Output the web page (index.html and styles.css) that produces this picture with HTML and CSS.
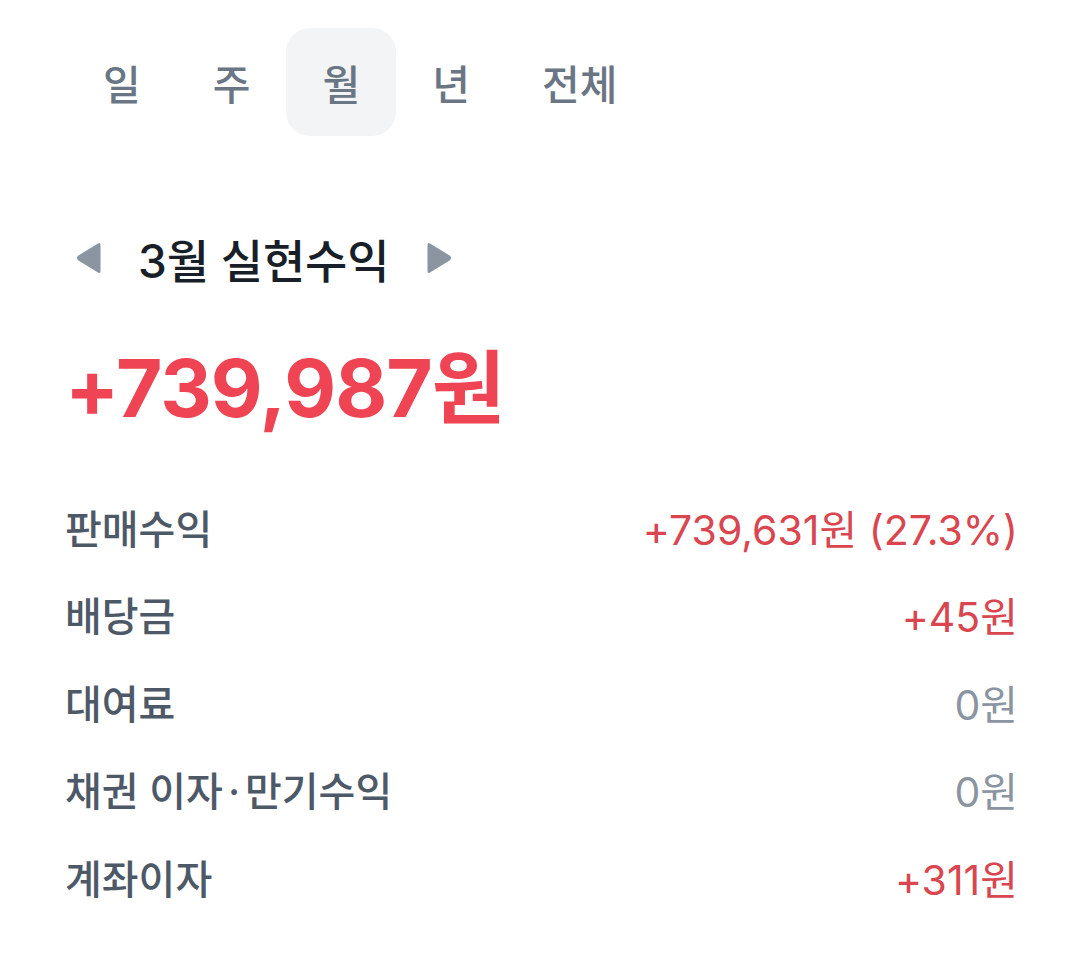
FILE: index.html
```html
<!DOCTYPE html>
<html lang="ko">
<head>
<meta charset="utf-8">
<link rel="stylesheet" href="styles.css">
</head>
<body>
<div class="page">
  <nav class="tabs">
    <span class="tab">일</span>
    <span class="tab">주</span>
    <span class="tab active">월</span>
    <span class="tab">년</span>
    <span class="tab">전체</span>
  </nav>
  <div class="period">
    <svg class="arrow" width="28" height="34" viewBox="0 0 28 34"><path d="M25.5 4 Q25.5 1 23 2.5 L3 14.8 Q1 17 3 19.2 L23 31.5 Q25.5 33 25.5 30 Z" fill="#8b95a1"/></svg>
    <h2 class="period-title">3월 실현수익</h2>
    <svg class="arrow" width="28" height="34" viewBox="0 0 28 34"><path d="M2.5 4 Q2.5 1 5 2.5 L25 14.8 Q27 17 25 19.2 L5 31.5 Q2.5 33 2.5 30 Z" fill="#8b95a1"/></svg>
  </div>
  <div class="total">+739,987원</div>
  <ul class="rows">
    <li class="row"><span class="label">판매수익</span><span class="value up">+739,631원 (27.3%)</span></li>
    <li class="row"><span class="label">배당금</span><span class="value up">+45원</span></li>
    <li class="row"><span class="label">대여료</span><span class="value zero">0원</span></li>
    <li class="row"><span class="label">채권 이자<span class="sep">·</span>만기수익</span><span class="value zero">0원</span></li>
    <li class="row"><span class="label">계좌이자</span><span class="value up">+311원</span></li>
  </ul>
</div>
</body>
</html>
```

FILE: styles.css
```css
html, body {
  margin: 0;
  padding: 0;
  background: #ffffff;
}
body {
  font-family: Inter, "Noto Sans CJK KR", "Noto Sans", sans-serif;
  -webkit-font-smoothing: antialiased;
}
.page {
  width: 1080px;
  height: 963px;
  box-sizing: border-box;
  padding: 28px 62px 0 67px;
}
.tabs {
  display: flex;
  align-items: center;
}
.tab {
  height: 108px;
  padding: 0 36px;
  display: flex;
  align-items: center;
  justify-content: center;
  font-size: 41px;
  font-weight: 500;
  color: #6b7684;
  border-radius: 24px;
}
.tab.active {
  background: #f2f4f6;
}
.period {
  display: flex;
  align-items: center;
  margin-top: 90px;
  height: 64px;
  margin-left: 8px;
}
.period-title {
  margin: 0 36px 0 35px;
  font-size: 46px;
  font-weight: 500;
  color: #191f28;
  letter-spacing: -0.2px;
}
.total {
  margin-top: 48px;
  font-size: 80px;
  font-weight: 700;
  color: #ee4454;
  line-height: 100px;
  letter-spacing: -1px;
  margin-left: -2px;
}
.rows {
  list-style: none;
  margin: 45px 0 0 -2px;
  padding: 0;
}
.row {
  display: flex;
  justify-content: space-between;
  align-items: center;
  height: 87.5px;
}
.label {
  font-size: 40px;
  font-weight: 500;
  color: #4e5968;
}
.sep {
  margin: 0 5px;
}
.value {
  font-size: 41px;
  font-weight: 400;
}
.value.up {
  color: #d9464f;
}
.value.zero {
  color: #8b95a1;
}
```
